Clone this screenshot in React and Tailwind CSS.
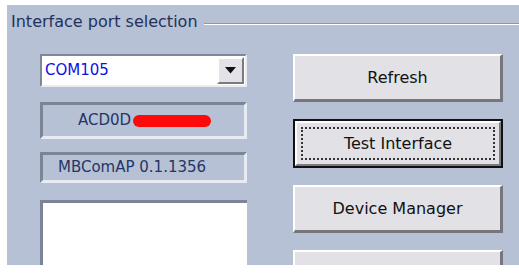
import React from 'react';

const FONT = { fontFamily: '"DejaVu Sans", Verdana, sans-serif' };

function RaisedButton({ label, focused }) {
  if (focused) {
    return (
      <div className="h-[49px] border-2 border-[#111] bg-[#e2e2e6]">
        <div className="h-full border-2 border-t-white border-l-white border-r-[#7a7a80] border-b-[#7a7a80] p-[4px]">
          <div className="h-full border-2 border-dotted border-[#333] flex items-center justify-center text-[16px] text-[#111]">
            {label}
          </div>
        </div>
      </div>
    );
  }
  return (
    <div className="h-[48px] bg-[#e2e2e6] border-t-2 border-l-2 border-t-white border-l-white border-r-[3px] border-b-[3px] border-r-[#76767c] border-b-[#76767c] flex items-center justify-center text-[16px] text-[#111]">
      {label}
    </div>
  );
}

export default function App() {
  return (
    <div className="w-[519px] h-[273px] bg-white pt-[5px] pl-[7px] overflow-hidden" style={FONT}>
      <div className="h-[260px] bg-[#b6c1d5] overflow-hidden">
        <div className="h-[31px] flex items-center pt-[3px]">
          <span className="pl-[4px] pr-[6px] text-[16px] text-[#24315c] whitespace-nowrap">
            Interface port selection
          </span>
          <div className="flex-1 mt-[3px] border-t border-b border-t-[#8d98ad] border-b-white" />
        </div>

        <div className="flex pl-[33px] pt-[18px] gap-[46px]">
          <div className="w-[207px] flex flex-col">
            <div className="h-[33px] bg-white border-2 border-t-[#7d8797] border-l-[#7d8797] border-r-[#e9edf3] border-b-[#e9edf3] flex items-center">
              <span className="flex-1 pl-[3px] text-[15px] text-[#1010e0]">COM105</span>
              <div className="w-[27px] h-[27px] mr-[1px] bg-[#e3e3e7] border-t-2 border-l-2 border-t-white border-l-white border-r-2 border-b-2 border-r-[#7a7a80] border-b-[#7a7a80] flex items-center justify-center">
                <svg width="11" height="7" viewBox="0 0 11 7">
                  <path d="M0 0 H11 L5.5 6.5 Z" fill="#111" />
                </svg>
              </div>
            </div>

            <div className="mt-[15px] h-[37px] border-[3px] border-t-[#7b8595] border-l-[#7b8595] border-r-[#e8ecf2] border-b-[#e8ecf2] flex items-center pl-[35px]">
              <span className="text-[15px] text-[#263567]">ACD0D</span>
              <span className="ml-[2px] w-[78px] h-[12px] rounded-full bg-[#ff0a0a]" />
            </div>

            <div className="mt-[13px] h-[31px] border-[3px] border-t-[#7b8595] border-l-[#7b8595] border-r-[#e8ecf2] border-b-[#e8ecf2] flex items-center pl-[15px]">
              <span className="text-[15px] text-[#263567]">MBComAP 0.1.1356</span>
            </div>

            <div className="mt-[17px] h-[80px] bg-white border-t-[3px] border-l-[3px] border-t-[#7b8595] border-l-[#7b8595]" />
          </div>

          <div className="w-[210px] flex flex-col gap-[17px]">
            <RaisedButton label="Refresh" />
            <RaisedButton label="Test Interface" focused />
            <RaisedButton label="Device Manager" />
            <div className="h-[48px] bg-[#e2e2e6] border-t-2 border-l-2 border-t-white border-l-white border-r-[3px] border-r-[#76767c]" />
          </div>
        </div>
      </div>
    </div>
  );
}
